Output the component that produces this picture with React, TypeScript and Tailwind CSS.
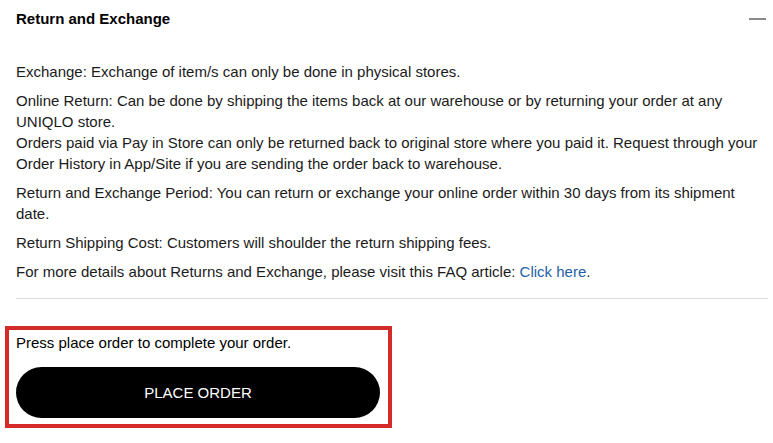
import React from "react";

export default function App() {
  return (
    <div className="w-[773px] h-[443px] overflow-hidden bg-white font-['Liberation_Sans',Arial,sans-serif] text-[15px] leading-[21px] text-[#1b1b1b]">
      <div className="pl-4 pr-[5px]">
        <div className="flex h-[37px] items-center justify-between">
          <h2 className="text-[15px] font-bold text-black">Return and Exchange</h2>
          <div className="mr-[2px] h-[2px] w-[17px] bg-[#8a8a8a]" />
        </div>
        <div className="pt-[24px]">
          <p className="mb-2">Exchange: Exchange of item/s can only be done in physical stores.</p>
          <p className="mb-2">
            Online Return: Can be done by shipping the items back at our warehouse or by returning your order at any
            UNIQLO store.
            <br />
            Orders paid via Pay in Store can only be returned back to original store where you paid it. Request through
            your Order History in App/Site if you are sending the order back to warehouse.
          </p>
          <p className="mb-2">
            Return and Exchange Period: You can return or exchange your online order within 30 days from its shipment
            date.
          </p>
          <p className="mb-2">Return Shipping Cost: Customers will shoulder the return shipping fees.</p>
          <p>
            For more details about Returns and Exchange, please visit this FAQ article:{" "}
            <a className="text-[#1f5fa6]">Click here</a>.
          </p>
        </div>
        <div className="mt-4 h-px bg-[#dcdcdc]" />
      </div>
      <div className="pl-[5px] pt-[27px]">
        <div className="w-[387px] border-4 border-[#d42a2a] pl-[7px] pr-[8px] pt-[2px] pb-[6px]">
          <p className="text-black">Press place order to complete your order.</p>
          <button className="mt-[14px] flex h-[51px] w-full items-center justify-center rounded-full bg-black text-[15px] text-white">
            PLACE ORDER
          </button>
        </div>
      </div>
    </div>
  );
}
